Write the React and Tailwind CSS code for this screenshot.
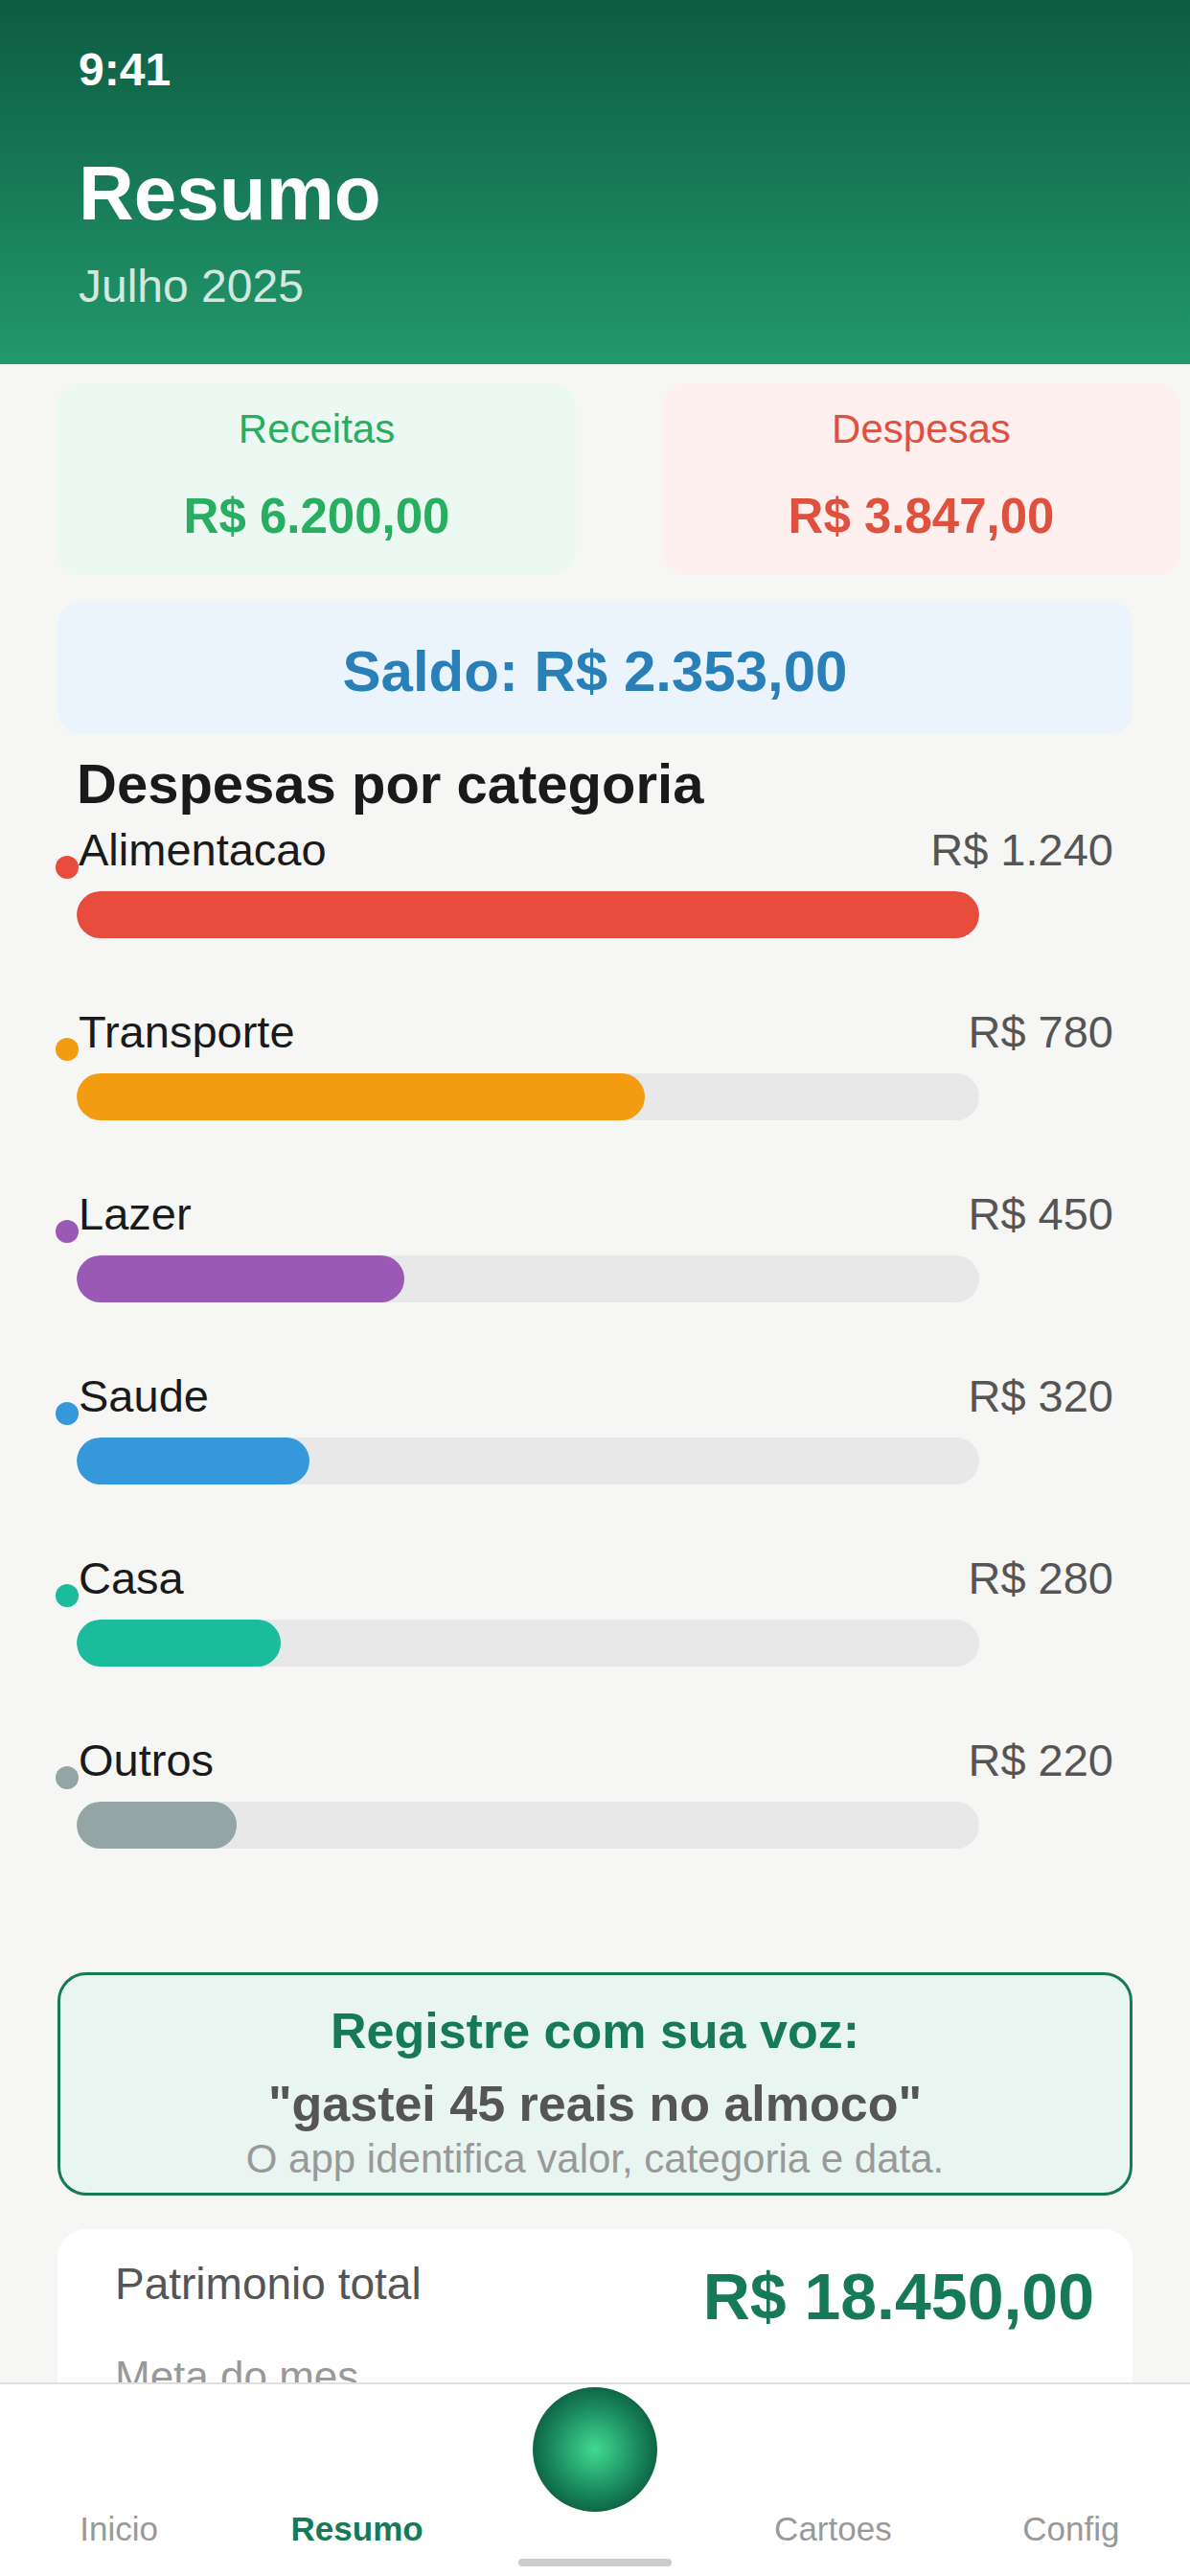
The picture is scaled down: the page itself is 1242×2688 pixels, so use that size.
import React from "react";

const categories = [
    { name: "Alimentacao", value: 1240, amount: "R$ 1.240", color: "bg-[#e74c3c]" },
    { name: "Transporte", value: 780, amount: "R$ 780", color: "bg-[#f39c12]" },
    { name: "Lazer", value: 450, amount: "R$ 450", color: "bg-[#9b59b6]" },
    { name: "Saude", value: 320, amount: "R$ 320", color: "bg-[#3498db]" },
    { name: "Casa", value: 280, amount: "R$ 280", color: "bg-[#1abc9c]" },
    { name: "Outros", value: 220, amount: "R$ 220", color: "bg-[#95a5a6]" },
];

const maxValue = Math.max(...categories.map((c) => c.value));

const navItems = ["Inicio", "Resumo", null, "Cartoes", "Config"];

const App = () => {
    return (
        <div className="flex h-[2688px] w-[1242px] flex-col overflow-hidden bg-[#f6f6f4] font-['Liberation_Sans',Arial,sans-serif]">
            {/* Header */}
            <header className="h-[380px] shrink-0 bg-gradient-to-b from-[#0d5c43] to-[#22996c] px-[82px] pt-[45px] text-white">
                <p className="text-[48px] font-bold leading-[55px]">9:41</p>
                <h1 className="mt-[56px] text-[80px] font-bold leading-[92px]">Resumo</h1>
                <p className="mt-[23px] text-[48px] leading-[55px] text-white/80">Julho 2025</p>
            </header>

            {/* Content */}
            <main className="flex min-h-0 flex-1 flex-col overflow-hidden pt-[20px]">
                {/* Receitas / Despesas */}
                <div className="flex gap-[90px] pl-[60px]">
                    <div className="flex h-[200px] w-[541px] shrink-0 flex-col items-center rounded-[24px] bg-[#ecf9f2] pt-[24px]">
                        <span className="text-[42px] leading-[48px] text-[#27ae60]">Receitas</span>
                        <span className="mt-[37px] text-[51px] font-bold leading-[59px] text-[#27ae60]">R$ 6.200,00</span>
                    </div>
                    <div className="flex h-[200px] w-[541px] shrink-0 flex-col items-center rounded-[24px] bg-[#fdf0ef] pt-[24px]">
                        <span className="text-[42px] leading-[48px] text-[#e0503f]">Despesas</span>
                        <span className="mt-[37px] text-[51px] font-bold leading-[59px] text-[#e0503f]">R$ 3.847,00</span>
                    </div>
                </div>

                {/* Saldo */}
                <div className="mx-[60px] mt-[27px] flex h-[139px] shrink-0 justify-center rounded-[24px] bg-[#ebf4fc] pt-[39px]">
                    <span className="text-[60px] font-bold leading-[69px] text-[#2980b9]">Saldo: R$ 2.353,00</span>
                </div>

                {/* Categorias */}
                <section className="flex shrink-0 flex-col px-[80px] pt-[18px]">
                    <h2 className="mb-[9px] text-[58px] font-bold leading-[67px] text-[#1a1a1a]">Despesas por categoria</h2>
                    {categories.map((c) => (
                        <div key={c.name} className="mb-[71px]">
                            <div className="flex h-[54px] items-start">
                                <span className={`-ml-[22px] mt-[33px] h-[24px] w-[24px] shrink-0 rounded-full ${c.color}`} />
                                <span className="text-[47px] leading-[54px] text-[#1a1a1a]">{c.name}</span>
                                <span className="ml-auto text-[47px] leading-[54px] text-[#555555]">{c.amount}</span>
                            </div>
                            <div className="mt-[16px] h-[49px] w-[942px] overflow-hidden rounded-full bg-[#e8e8e8]">
                                <div
                                    className={`h-full rounded-full ${c.color}`}
                                    style={{ width: `${(c.value / maxValue) * 100}%` }}
                                />
                            </div>
                        </div>
                    ))}
                </section>

                {/* Voz */}
                <div className="mx-[60px] mt-[58px] flex h-[233px] shrink-0 flex-col items-center rounded-[30px] border-[3px] border-[#167a56] bg-[#e8f5f0] pt-[29px]">
                    <p className="text-[52px] font-bold leading-[59px] text-[#167a56]">Registre com sua voz:</p>
                    <p className="mt-[17px] text-[52px] font-bold leading-[59px] text-[#555555]">"gastei 45 reais no almoco"</p>
                    <p className="mt-[4px] text-[42px] leading-[47px] text-[#999999]">O app identifica valor, categoria e data.</p>
                </div>

                {/* Patrimonio */}
                <div className="mx-[60px] mt-[35px] shrink-0 rounded-[30px] bg-white pb-[40px] pl-[60px] pr-[40px] pt-[31px]">
                    <div className="flex items-start justify-between">
                        <span className="text-[46px] leading-[52px] text-[#555555]">Patrimonio total</span>
                        <span className="text-[68px] font-bold leading-[78px] text-[#167a56]">R$ 18.450,00</span>
                    </div>
                    <p className="mt-[20px] text-[44px] leading-[50px] text-[#999999]">Meta do mes</p>
                    <div className="mt-[16px] h-[30px] w-full rounded-full bg-[#e8e8e8]" />
                </div>
            </main>

            {/* Bottom nav */}
            <nav className="relative h-[202px] shrink-0 border-t-2 border-[#e0e0e0] bg-white">
                <div className="grid grid-cols-5">
                    {navItems.map((item, i) =>
                        item ? (
                            <div key={item} className="flex justify-center pt-[131px]">
                                <span
                                    className={`text-[35px] leading-[40px] ${
                                        item === "Resumo" ? "font-bold text-[#167a56]" : "text-[#999999]"
                                    }`}
                                >
                                    {item}
                                </span>
                            </div>
                        ) : (
                            <div key={i} className="flex justify-center pt-[3px]">
                                <button className="h-[130px] w-[130px] rounded-full bg-[radial-gradient(circle_closest-side,#41da90,#1c8e61_65%,#0e6646)]" />
                            </div>
                        )
                    )}
                </div>
                <div className="absolute bottom-[10px] left-1/2 h-[8px] w-[160px] -translate-x-1/2 rounded-full bg-[#cccccc]" />
            </nav>
        </div>
    );
};

export default App;
